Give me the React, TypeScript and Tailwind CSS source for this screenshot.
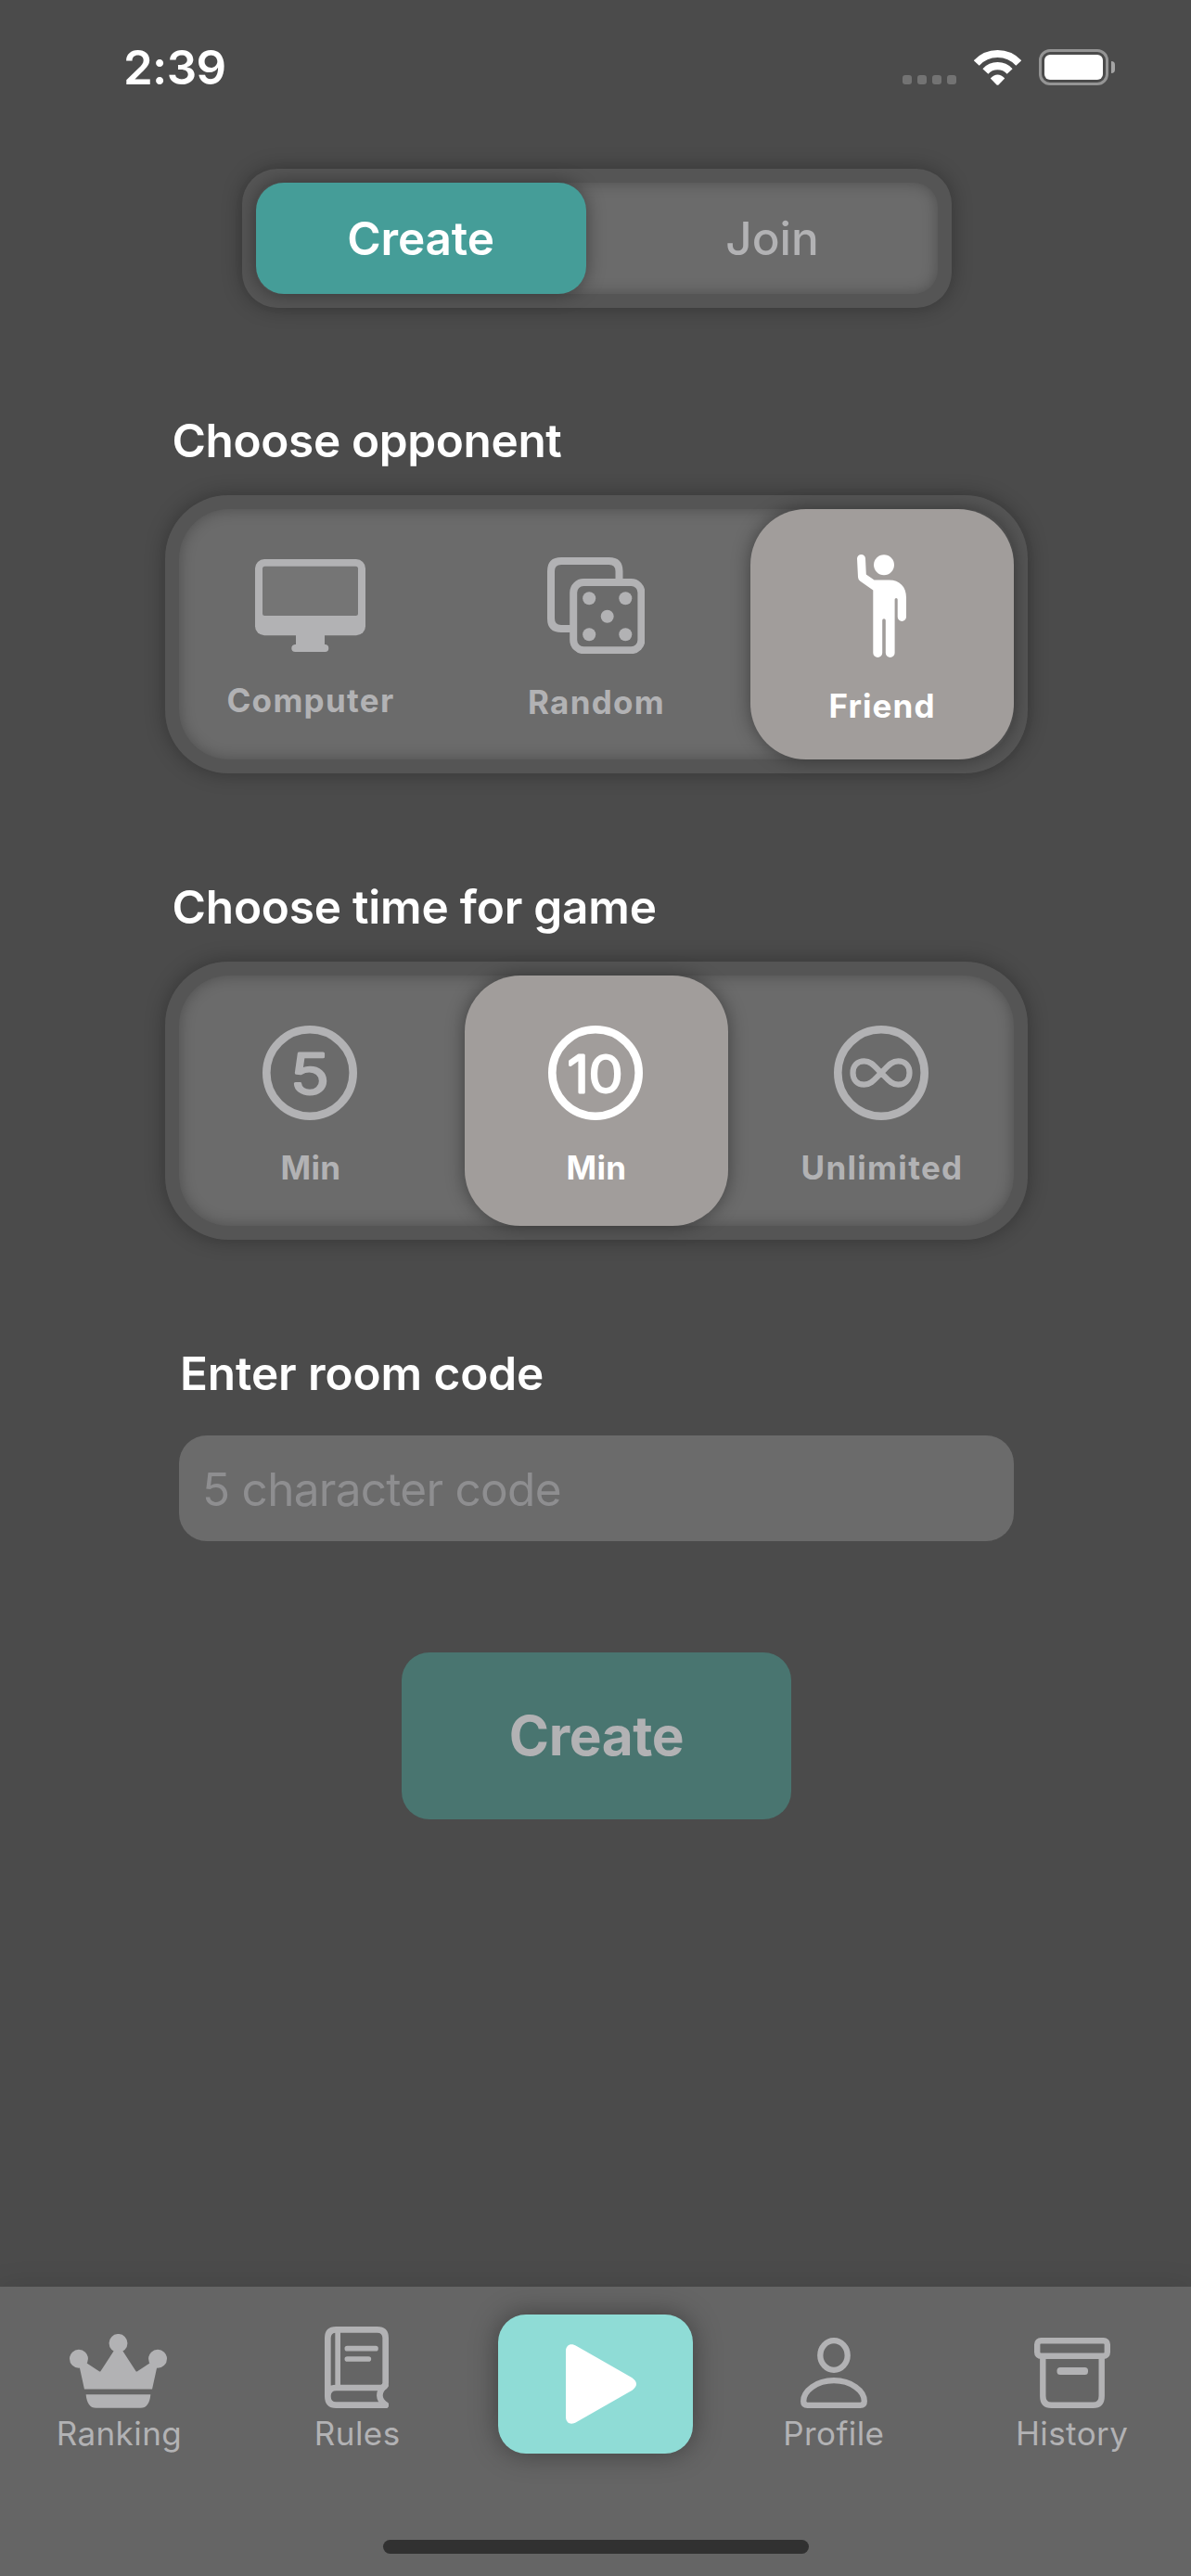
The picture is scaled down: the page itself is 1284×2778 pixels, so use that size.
import React, { ReactNode } from "react";

const MUTED = "#b2b2b4";

function WifiIcon() {
  return (
    <svg className="h-[38px] w-[51px]" viewBox="0 0 152 113" fill="none">
      <path d="M8.2 41.8A92 92 0 0 1 143.8 41.8" stroke="#fff" strokeWidth="24" />
      <path d="M36.9 68.2A53 53 0 0 1 115.1 68.2" stroke="#fff" strokeWidth="24" />
      <path d="M53 91Q76 66 99 91L79 111.5Q76 114 73 111.5Z" fill="#fff" />
    </svg>
  );
}

function StatusBar() {
  return (
    <header className="flex h-[182px] items-start pl-[133px] pr-[82px]">
      <span className="mt-[43px] text-[51px] font-semibold leading-[60px] tracking-[-0.7px]">2:39</span>
      <div className="ml-auto flex gap-[6px] pt-[81px]">
        {[0, 1, 2, 3].map((i) => (
          <span key={i} className="size-[10px] rounded-[3px] bg-[#737373]" />
        ))}
      </div>
      <div className="ml-[19px] pt-[53.5px]">
        <WifiIcon />
      </div>
      <div className="ml-[19px] flex items-center gap-[3px] pt-[53px]">
        <div className="h-[39px] w-[75px] rounded-[12px] border-[3px] border-[#949494] p-[3px]">
          <div className="h-full w-full rounded-[6px] bg-white" />
        </div>
        <div className="h-[13px] w-[4px] rounded-r-full bg-[#a5a5a5]" />
      </div>
    </header>
  );
}

function MonitorIcon() {
  return (
    <svg className="mr-[2px] h-[100px] w-[119px]" viewBox="0 0 119 100" fill={MUTED}>
      <rect y="0" width="119" height="82.3" rx="10" />
      <rect x="8" y="7.8" width="103" height="53.2" rx="2.5" fill="#757575" />
      <path d="M44 82H75V92H76Q79.3 92.5 79.3 96.3Q79.3 100 75.5 100H43.5Q39.3 100 39.3 96.3Q39.3 92.5 43 92H44Z" />
    </svg>
  );
}

function DiceIcon() {
  return (
    <svg className="mr-[2px] h-[104px] w-[105px]" viewBox="0 0 105 104" fill="none" stroke={MUTED} strokeWidth="8">
      <path d="M26 77H15Q4 77 4 66V15Q4 4 15 4H66.5Q77.5 4 77.5 15V26" />
      <rect x="28.2" y="27" width="73.2" height="73.2" rx="11" />
      <g fill={MUTED} stroke="none">
        <circle cx="45.2" cy="44.3" r="7" />
        <circle cx="84.3" cy="44.3" r="7" />
        <circle cx="64.7" cy="63.7" r="7" />
        <circle cx="45.2" cy="83.3" r="7" />
        <circle cx="84.3" cy="83.3" r="7" />
      </g>
    </svg>
  );
}

function WavingPersonIcon() {
  return (
    <svg className="mr-[2px] h-[111px] w-[53px]" viewBox="0 0 53 111" fill="#fff">
      <circle cx="29" cy="11.3" r="11" />
      <path d="M0 4.5A4.5 4.5 0 0 1 9 4.5L9.8 21.6L18.5 27.6H34.5C46 27.6 53 35 53 46.500V67.300A4.650 4.650 0 0 1 43.700 67.300V48.500A1.550 1.550 0 0 0 40.600 48.500V106A4.900 4.900 0 0 1 30.800 106V71A1.800 1.800 0 0 0 27.200 71V106A4.950 4.950 0 0 1 17.300 106V38.600L3.400 28.700Q1.100 27 1 24.500Z" />
    </svg>
  );
}

function Ring({ color, children }: { color: string; children: ReactNode }) {
  return (
    <svg className="-mb-px mr-[2px] size-[102px]" viewBox="0 0 102 102" fill="none" stroke={color}>
      <circle cx="51" cy="51" r="46.7" strokeWidth="8.6" />
      {children}
    </svg>
  );
}

function FiveIcon() {
  return (
    <Ring color={MUTED}>
      <text x="30" y="73.5" textLength="42" lengthAdjust="spacingAndGlyphs" fill={MUTED} strokeWidth="3" strokeLinejoin="round" className="text-[60px] font-light">
        5
      </text>
    </Ring>
  );
}

function TenIcon() {
  return (
    <Ring color="#fff">
      <text x="20.500" y="71.600" textLength="60" lengthAdjust="spacingAndGlyphs" fill="#fff" strokeWidth="3" strokeLinejoin="round" className="text-[55px] font-light">
        10
      </text>
    </Ring>
  );
}

function InfinityIcon() {
  return (
    <Ring color={MUTED}>
      <path
        strokeWidth="6.2"
        d="M51 51C43.5 43.5 40 38.4 32.6 38.4C25 38.4 20.5 43.6 20.5 51S25 63.6 32.6 63.6C40 63.6 43.5 58.5 51 51S62 38.4 69.4 38.4C77 38.4 81.5 43.6 81.5 51S77 63.6 69.4 63.6C62 63.6 58.5 58.5 51 51Z"
      />
    </Ring>
  );
}

function CrownIcon() {
  return (
    <svg className="mr-[2px] h-[80px] w-[105px]" viewBox="0 0 316 240" fill={MUTED}>
      <circle cx="30" cy="80" r="30" />
      <circle cx="158" cy="29.5" r="30" />
      <circle cx="286" cy="80" r="30" />
      <path d="M32 106L48 179H268L284 106L261 94L220 121Q217 123 215 120L172 54H144L101 120Q99 123 96 121L55 94Z" />
      <path d="M53 196H263C260 224 250 240 230 240H86C66 240 56 224 53 196Z" />
    </svg>
  );
}

function BookIcon() {
  return (
    <svg className="mr-[2px] h-[88px] w-[69px]" viewBox="0 0 207 264" fill="none" stroke={MUTED} strokeWidth="20">
      <path d="M197 254H37Q10 254 10 225V37Q10 10 37 10H170Q197 10 197 37V182Q197 198 181 198H37Q10 198 10 225" strokeLinecap="round" />
      <path d="M42.5 14V196" strokeWidth="17" />
      <path d="M196 190C172 212 172 234 197 254" strokeLinecap="round" />
      <path d="M73 71H165M73 105H142" strokeWidth="17" strokeLinecap="round" />
    </svg>
  );
}

function PlayIcon() {
  return (
    <svg className="h-[86px] w-[77px]" viewBox="0 0 77 86" fill="#fff">
      <path d="M0 7.5C0 .8 5.5-1.7 11.5 1.9L71.500 36.300Q80.500 43 71.500 49.700L11.500 84.100C5.500 87.700 0 85.200 0 78.500Z" />
    </svg>
  );
}

function ProfileIcon() {
  return (
    <svg className="h-[76px] w-[72px]" viewBox="0 0 72 76" fill="none" stroke={MUTED} strokeWidth="6.3">
      <ellipse cx="36" cy="19" rx="14.7" ry="15.8" />
      <path d="M3.200 68.500C3.200 57.500 17 46.200 36 46.200S68.800 57.500 68.800 68.500Q68.800 72.800 64.500 72.800H7.500Q3.200 72.800 3.200 68.500Z" />
    </svg>
  );
}

function ArchiveIcon() {
  return (
    <svg className="h-[76px] w-[82px]" viewBox="0 0 82 76" fill="none" stroke={MUTED} strokeWidth="6.400">
      <rect x="3.200" y="3.200" width="75.600" height="16.600" rx="4" />
      <path d="M9.300 20V63Q9.300 72.800 18.500 72.800H63.500Q72.700 72.800 72.700 63V20" />
      <rect x="24.500" y="32" width="33.500" height="8" rx="3.500" fill={MUTED} stroke="none" />
    </svg>
  );
}

type Option = { label: string; tracking: string; icon: ReactNode; active?: boolean };

function OptionPanel({ options }: { options: Option[] }) {
  return (
    <div className="mt-[29px] h-[300px] w-[930px] rounded-[68px] bg-[#555555] p-[15px] shadow-[0_0_22px_rgba(0,0,0,0.3)]">
      <div className="grid h-full grid-cols-3 gap-6 rounded-[54px] bg-[#6b6b6b] shadow-[inset_0_0_16px_rgba(0,0,0,0.28)]">
        {options.map((o, i) => (
          <button
            key={i}
            className={
              o.active
                ? "flex flex-col items-center justify-center rounded-[60px] bg-[#a19d9b] pt-3 text-white shadow-[0_0_20px_rgba(0,0,0,0.4)]"
                : "flex flex-col items-center justify-center pt-3 text-[#b2b2b4]"
            }
          >
            {o.icon}
            <span className={`mt-[30px] text-[35px] font-[650] leading-[44px] ${o.tracking}`}>{o.label}</span>
          </button>
        ))}
      </div>
    </div>
  );
}

const opponents: Option[] = [
  { label: "Computer", tracking: "tracking-[1.3px]", icon: <MonitorIcon /> },
  { label: "Random", tracking: "tracking-[1.3px]", icon: <DiceIcon /> },
  { label: "Friend", tracking: "tracking-[1.1px]", icon: <WavingPersonIcon />, active: true },
];

const times: Option[] = [
  { label: "Min", tracking: "tracking-[0.3px]", icon: <FiveIcon /> },
  { label: "Min", tracking: "tracking-[0.3px]", icon: <TenIcon />, active: true },
  { label: "Unlimited", tracking: "tracking-[1.3px]", icon: <InfinityIcon /> },
];

function NavItem({ label, icon }: { label: string; icon: ReactNode }) {
  return (
    <a className="flex flex-col items-center text-[#b2b2b4]">
      <span className="flex h-[131px] items-end">{icon}</span>
      <span className="mt-[5px] text-[35px] leading-[44px] tracking-[0.42px]">{label}</span>
    </a>
  );
}

function TabBar() {
  return (
    <nav className="mt-auto h-[312px] bg-[#656565] shadow-[0_0_30px_rgba(0,0,0,0.1)]">
      <div className="grid h-[273px] grid-cols-5">
        <NavItem label="Ranking" icon={<CrownIcon />} />
        <NavItem label="Rules" icon={<BookIcon />} />
        <div className="flex justify-center pt-[30px]">
          <button className="flex h-[150px] w-[210px] items-center justify-center rounded-[30px] bg-[#8fdcd6] pl-[13px] shadow-[0_0_30px_rgba(0,0,0,0.38)]">
            <PlayIcon />
          </button>
        </div>
        <NavItem label="Profile" icon={<ProfileIcon />} />
        <NavItem label="History" icon={<ArchiveIcon />} />
      </div>
      <div className="mx-auto h-[15px] w-[459px] rounded-full bg-[#313131]" />
    </nav>
  );
}

export default function App() {
  return (
    <div className="flex h-[2778px] w-[1284px] flex-col overflow-hidden bg-[#4b4b4b] font-['Inter',sans-serif] text-white">
      <StatusBar />

      <div className="ml-[260.5px] h-[150px] w-[765px] rounded-[38px] bg-[#555555] p-[15px] shadow-[0_0_22px_rgba(0,0,0,0.3)]">
        <div className="flex h-full rounded-[26px] bg-[#6b6b6b] text-[49.5px] shadow-[inset_0_0_16px_rgba(0,0,0,0.28)]">
          <button className="w-[356px] rounded-[30px] bg-[#459d98] font-semibold tracking-[-0.15px] shadow-[0_0_20px_rgba(0,0,0,0.4)]">
            Create
          </button>
          <button className="ml-[23px] w-[356px] font-medium text-[#b2b2b4]">Join</button>
        </div>
      </div>

      <section className="ml-[178px] mt-[113px]">
        <h2 className="pl-[7.5px] text-[49.5px] font-semibold leading-[60px] tracking-[-0.36px]">Choose opponent</h2>
        <OptionPanel options={opponents} />
      </section>

      <section className="ml-[178px] mt-[114px]">
        <h2 className="pl-[7.5px] text-[49.5px] font-semibold leading-[60px] tracking-[-0.2px]">Choose time for game</h2>
        <OptionPanel options={times} />
      </section>

      <section className="ml-[193px] mt-[114px] w-[900px]">
        <h2 className="pl-[1px] text-[49.5px] font-semibold leading-[60px] tracking-[-0.1px]">Enter room code</h2>
        <input
          placeholder="5 character code"
          className="mt-[37px] block h-[114px] w-full rounded-[30px] bg-[#6b6b6b] px-[25px] pt-[2px] text-[49.5px] tracking-[-0.72px] outline-none placeholder:text-[#8e8e90]"
        />
      </section>

      <button className="ml-[433px] mt-[120px] h-[180px] w-[420px] shrink-0 rounded-[30px] bg-[#497570] text-[58.5px] font-bold tracking-[-0.4px] text-[#b2b2b4]">
        Create
      </button>

      <TabBar />
    </div>
  );
}
